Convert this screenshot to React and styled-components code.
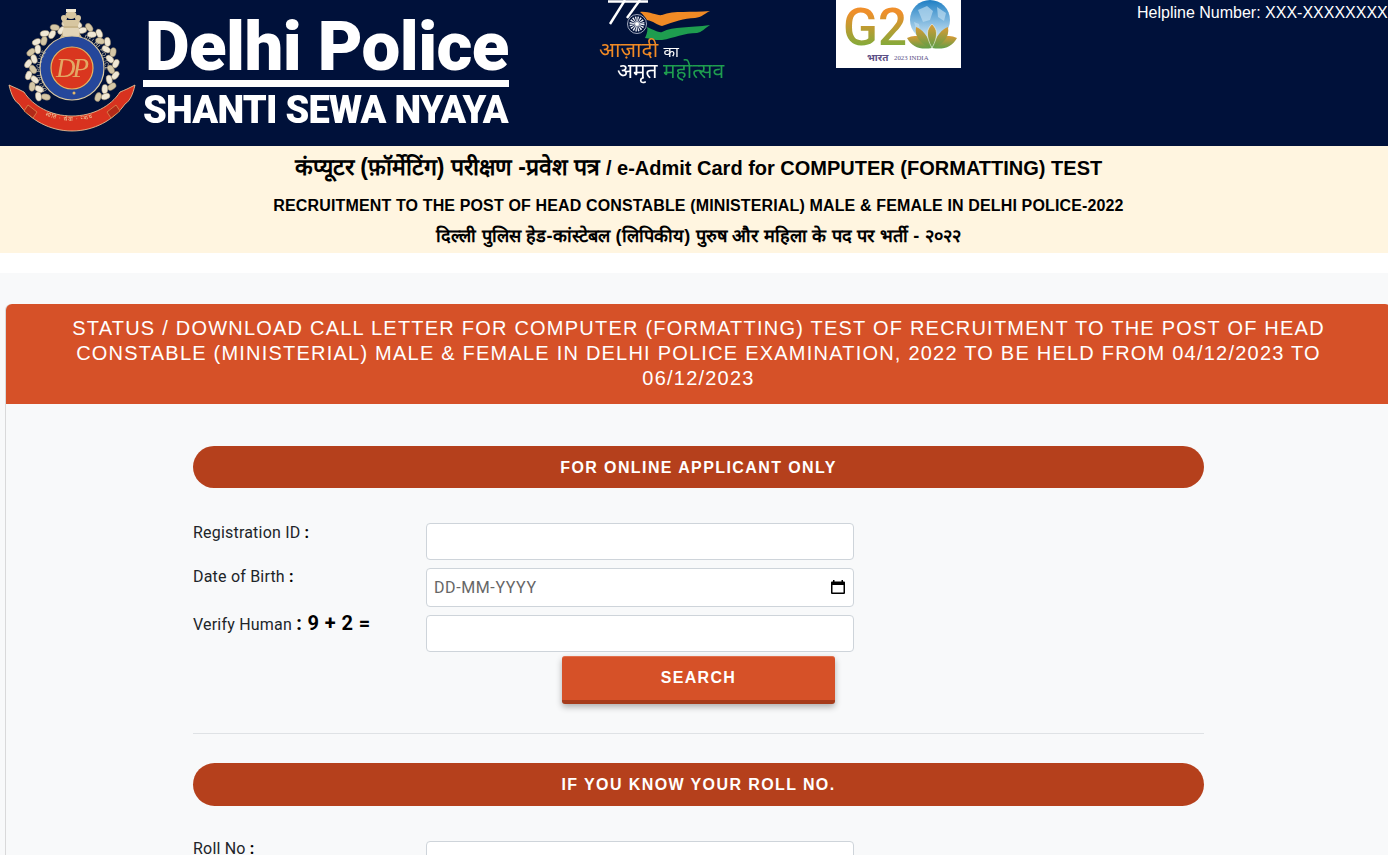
import React from "react";
import styled, { createGlobalStyle } from "styled-components";

const Global = createGlobalStyle`
  html, body { margin: 0; padding: 0; height: 855px; overflow: hidden; background: #fff; }
  * { box-sizing: border-box; }
  body { font-family: Roboto, "Liberation Sans", "Noto Sans", sans-serif; color: #212529; }
`;

const Page = styled.div`
  width: 1388px;
  height: 855px;
  overflow: hidden;
`;

const TopBar = styled.header`
  height: 146px;
  background: #00113a;
  display: flex;
  align-items: flex-start;
  overflow: hidden;
`;

const Brand = styled.div`
  display: flex;
  width: 599px;
  padding: 8px 0 0 8px;
  gap: 7px;
  filter: blur(0.4px);
`;

const EmblemSvg = styled.svg`
  display: block;
  flex: none;
`;

const BrandText = styled.div`
  display: flex;
  flex-direction: column;
  width: 366px;
  color: #fff;
  font-family: Roboto, sans-serif;
  font-weight: 900;
  white-space: nowrap;
`;

const BrandName = styled.div`
  font-size: 69px;
  line-height: 64px;
  letter-spacing: -0.6px;
  padding: 7px 0 0 2px;
`;

const BrandRule = styled.div`
  height: 7px;
  background: #fff;
  margin-top: 1px;
`;

const BrandMotto = styled.div`
  font-size: 38px;
  line-height: 40px;
  margin-top: 3px;
  letter-spacing: -0.75px;
`;

const Azadi = styled.div`
  width: 237px;
  height: 84px;
  filter: blur(0.3px);
`;

const AzadiLine = styled.div`
  font-family: "Noto Sans", sans-serif;
  white-space: nowrap;
  font-size: 21px;
  line-height: 19px;
  padding-left: ${(p) => p.$pad}px;
`;

const AzadiMark = styled.svg`
  display: block;
`;

const Tint = styled.span`
  color: ${(p) => p.$c};
  font-size: ${(p) => (p.$size ? `${p.$size}px` : "inherit")};
`;

const G20Box = styled.div`
  width: 125px;
  height: 68px;
  background: #fff;
  flex: none;
`;

const G20Svg = styled.svg`
  display: block;
`;

const Helpline = styled.div`
  margin-left: 176px;
  margin-top: 4px;
  color: #fff;
  font-family: "Liberation Sans", Arial, sans-serif;
  font-size: 16px;
  line-height: 18px;
  white-space: nowrap;
`;

const Notice = styled.section`
  height: 107px;
  background: #fff5e0;
  text-align: center;
  color: #000;
  font-family: "Liberation Sans", Arial, sans-serif;
  font-weight: 700;
  display: flex;
  flex-direction: column;
  align-items: center;
  padding: 7px 0 0 9px;
`;

const NoticeLine = styled.div`
  font-size: ${(p) => p.$size}px;
  line-height: ${(p) => p.$lh}px;
  letter-spacing: ${(p) => p.$ls || 0}px;
  margin-top: ${(p) => p.$mt || 0}px;
  white-space: nowrap;
`;

const Hindi = styled.span`
  font-size: 23px;
`;

const Gap = styled.div`
  height: 20px;
  background: #fff;
`;

const Body = styled.main`
  background: #f8f9fa;
  padding: 31px 0 0 5px;
  height: 582px;
`;

const Card = styled.div`
  width: 1387px;
  border: 1px solid rgba(0, 0, 0, 0.125);
  border-top: 0;
  border-bottom: 0;
  border-radius: 6px 6px 0 0;
  background: #f8f9fa;
`;

const CardHead = styled.h1`
  margin: 0;
  height: 100px;
  padding: 12px 60px 0;
  background: #d65128;
  color: #fff;
  border-radius: 6px 6px 0 0;
  font-family: "Liberation Sans", Arial, sans-serif;
  font-weight: 400;
  font-size: 20px;
  line-height: 25px;
  letter-spacing: 1.22px;
  text-align: center;
`;

const CardBody = styled.div`
  padding: 42px 187px 0;
`;

const Pill = styled.div`
  height: ${(p) => p.$h}px;
  padding-top: ${(p) => p.$pt || 0}px;
  border-radius: 22px;
  background: #b5401c;
  color: #fff;
  font-family: "Liberation Sans", Arial, sans-serif;
  font-weight: 700;
  font-size: 16px;
  letter-spacing: 1.4px;
  display: flex;
  align-items: center;
  justify-content: center;
`;

const Row = styled.div`
  display: grid;
  grid-template-columns: 233px 428px;
  margin-top: ${(p) => p.$mt}px;
`;

const Label = styled.label`
  font-family: Roboto, sans-serif;
  font-size: 16px;
  line-height: 24px;
  letter-spacing: 0.2px;
  color: #212529;
  margin-top: ${(p) => p.$mt}px;
  white-space: nowrap;
`;

const Strong = styled.b`
  font-size: ${(p) => p.$size || 16}px;
  font-weight: 700;
  color: #000;
  letter-spacing: 0.4px;
`;

const Field = styled.div`
  position: relative;
  height: ${(p) => p.$h}px;
`;

const Input = styled.input`
  display: block;
  width: 100%;
  height: 100%;
  border: 1px solid #ced4da;
  border-radius: 4px;
  background: #fff;
  padding: 0 7px;
  font-family: Roboto, sans-serif;
  font-size: 16px;
  letter-spacing: 0.6px;
  &::placeholder { color: #666; opacity: 1; }
`;

const CalIcon = styled.svg`
  position: absolute;
  right: 8px;
  top: 11px;
`;

const ButtonRow = styled.div`
  display: flex;
  justify-content: center;
  margin-top: 4px;
`;

const SearchButton = styled.button`
  width: 273px;
  height: 48px;
  padding: 0 0 2px;
  border: 0;
  border-top: 1px solid #e2704c;
  border-bottom: 4px solid #a63b1b;
  border-radius: 3px;
  background: #d65128;
  color: #fff;
  font-family: "Liberation Sans", Arial, sans-serif;
  font-weight: 700;
  font-size: 16px;
  letter-spacing: 1.3px;
  box-shadow: 0 3px 6px rgba(0, 0, 0, 0.3);
`;

const Divider = styled.hr`
  margin: 29px 0;
  border: 0;
  border-top: 1px solid #dfe2e5;
`;

function Emblem() {
  const leaves = [];
  for (let i = 0; i <= 36; i++) {
    const deg = -138 + (i * 276) / 36;
    leaves.push(deg);
  }
  const rad = (d) => (d * Math.PI) / 180;
  return (
    <EmblemSvg width="128" height="124" viewBox="8 8 128 124">
      <defs>
        <path id="ringL" d="M47 90A32 32 0 0 1 62 40" />
        <path id="ringR" d="M84 38A32 32 0 0 1 100 85" />
        <path id="rib" d="M38 112Q72 130 106 112" />
      </defs>
      {leaves.map((d, i) => {
        const r = i % 2 ? 44 : 39;
        const x = 72 + Math.sin(rad(d)) * r;
        const y = 68 - Math.cos(rad(d)) * r;
        return (
          <ellipse
            key={i}
            cx={x}
            cy={y}
            rx="4.6"
            ry="3"
            transform={`rotate(${d + (i % 2 ? 30 : -30)} ${x} ${y})`}
            fill={i % 3 ? "#f0e8d6" : "#d5c7a6"}
            stroke="#9c8c6c"
            strokeWidth=".5"
          />
        );
      })}
      <g fill="#d7c6a0">
        <ellipse cx="71" cy="15" rx="5.500" ry="4" />
        <circle cx="64" cy="18" r="3" />
        <circle cx="78" cy="18" r="3" />
        <path d="M62 20h18l-2 6h-14z" />
        <path d="M64 26h14l2 8 3 5H59l3-5z" fill="#c9b68c" />
      </g>
      <path d="M66 9h10v3H66z" fill="#efe6d0" />
      <path d="M63 28h16v8H63z" fill="#efe6d0" opacity=".65" />
      <circle cx="72" cy="68" r="32" fill="#25479b" stroke="#d9c8a2" strokeWidth="1.2" />
      <text fontFamily="Roboto, sans-serif" fontSize="5.500" fill="#d9cfb2" letterSpacing=".5">
        <textPath href="#ringL">DELHI POLICE</textPath>
      </text>
      <text fontFamily="Roboto, sans-serif" fontSize="5.500" fill="#d9cfb2" letterSpacing=".5">
        <textPath href="#ringR">DELHI POLICE</textPath>
      </text>
      <circle cx="72" cy="68" r="21" fill="#d9361f" stroke="#e9b65f" strokeWidth="1.2" />
      <text x="71" y="77" textAnchor="middle" fontFamily="Liberation Serif, serif" fontStyle="italic" fontSize="27" letterSpacing="-3" fill="#e3a864">DP</text>
      <circle cx="74" cy="93" r="1.500" fill="#e3b86a" />
      <path d="M9 85l9 4c2 1 4 2 6 3 9 14 27 24 48 24s39-10 48-24c2-1 5-2 7-3l8-4c-2 9-5 16-10 19-11 16-31 27-53 27s-42-11-53-27c-5-3-8-10-10-19z" fill="#d8321f" stroke="#f0d0a0" strokeWidth=".8" />
      <path d="M28 105l9 7-4 6-9-7zM116 105l-9 7 4 6 9-7z" fill="#b22a18" stroke="#e0a860" strokeWidth=".6" />
      <text fontFamily="Noto Sans, sans-serif" fontSize="5.500" fill="#f1d9a8" letterSpacing="1">
        <textPath href="#rib" startOffset="8">शांति · सेवा · न्याय</textPath>
      </text>
    </EmblemSvg>
  );
}

function AzadiLogo() {
  return (
    <Azadi>
      <AzadiMark width="125" height="40" viewBox="0 0 125 40">
        <g stroke="#fff" strokeWidth="2.400" fill="none">
          <path d="M26 0L11 24" />
          <path d="M41 0L28 18" />
          <path d="M9 1.500H49" />
        </g>
        <circle cx="38" cy="24" r="9.500" fill="#00113a" stroke="#c9cfde" strokeWidth=".8" />
        <circle cx="38" cy="24" r="4.500" fill="none" stroke="#eef0f6" strokeWidth="6" strokeDasharray="1 .75" />
        <circle cx="38" cy="24" r="2" fill="#fff" />
        <path d="M41 12C50 11 58 16 63 15C75 10 92 13 111 11C105 14 103 17 96 18C85 18 75 22 63 26C58 25 54 21 48 20C46 17 44 14 41 12Z" fill="#f08a25" />
        <path d="M48 27C55 30 60 33 63 32C75 26 90 28 111 25C105 29 103 32 98 33C85 33 75 38 63 40C58 41 54 39 46 38C48 34 49 30 48 27Z" fill="#1e9d4f" />
      </AzadiMark>
      <AzadiLine $pad={0}>
        <Tint $c="#f08a25">आज़ादी</Tint> <Tint $c="#fff" $size={15}>का</Tint>
      </AzadiLine>
      <AzadiLine $pad={18}>
        <Tint $c="#fff">अमृत</Tint> <Tint $c="#1e9d4f">महोत्सव</Tint>
      </AzadiLine>
    </Azadi>
  );
}

function G20Logo() {
  return (
    <G20Box>
      <G20Svg width="125" height="68" viewBox="0 0 125 68">
        <defs>
          <linearGradient id="g" x1="0" x2="0" y1="0" y2="1">
            <stop offset=".25" stopColor="#ef8f2b" />
            <stop offset=".85" stopColor="#79ad3c" />
          </linearGradient>
          <linearGradient id="b" x1="0" x2="0" y1="0" y2="1">
            <stop offset="0" stopColor="#1f7fc4" />
            <stop offset="1" stopColor="#d8ecf7" />
          </linearGradient>
          <linearGradient id="p" x1="0" x2="0" y1="0" y2="1">
            <stop offset="0" stopColor="#d99a35" />
            <stop offset="1" stopColor="#5f9e47" />
          </linearGradient>
        </defs>
        <text x="7" y="45" fontFamily="Roboto, sans-serif" fontSize="52" fontWeight="500" fill="url(#g)" textLength="64" lengthAdjust="spacingAndGlyphs">G2</text>
        <circle cx="94" cy="20" r="20" fill="url(#b)" />
        <path d="M82 10l9-4 6 5-3 9-7 2zM101 7l9 6-2 8-6-4zM78 22l5 2 1 6-4-1z" fill="#bcdcf0" opacity=".7" />
        <path d="M71 38c8-4 15-2 20 5l5 5c-12 2-20-1-25-10z" fill="url(#p)" />
        <path d="M121 38c-8-4-15-2-20 5l-5 5c12 2 20-1 25-10z" fill="url(#p)" />
        <path d="M80 27c6 2 12 9 16 21-10-3-18-10-16-21z" fill="url(#p)" />
        <path d="M112 27c-6 2-12 9-16 21 10-3 18-10 16-21z" fill="url(#p)" />
        <path d="M96 24c5 5 7 11 0 24-7-13-5-19 0-24z" fill="url(#p)" stroke="#fff" strokeWidth=".5" />
        <text x="31" y="61" fontFamily="Noto Sans, sans-serif" fontSize="10" fontWeight="700" fill="#5b4f86">भारत</text>
        <text x="58" y="60" fontFamily="Liberation Serif, serif" fontSize="6.800" fill="#5b4f86">2023 INDIA</text>
      </G20Svg>
    </G20Box>
  );
}

export default function App() {
  return (
    <Page>
      <Global />
      <TopBar>
        <Brand>
          <Emblem />
          <BrandText>
            <BrandName>Delhi Police</BrandName>
            <BrandRule />
            <BrandMotto>SHANTI SEWA NYAYA</BrandMotto>
          </BrandText>
        </Brand>
        <AzadiLogo />
        <G20Logo />
        <Helpline>Helpline Number: XXX-XXXXXXXX</Helpline>
      </TopBar>
      <Notice>
        <NoticeLine $size={20} $lh={28}><Hindi>कंप्यूटर (फ़ॉर्मेटिंग) परीक्षण -प्रवेश पत्र</Hindi> / e-Admit Card for COMPUTER (FORMATTING) TEST</NoticeLine>
        <NoticeLine $size={16} $lh={24} $mt={12} $ls={0.14}>RECRUITMENT TO THE POST OF HEAD CONSTABLE (MINISTERIAL) MALE &amp; FEMALE IN DELHI POLICE-2022</NoticeLine>
        <NoticeLine $size={18.1} $lh={26} $mt={5} $ls={0.15}>दिल्ली पुलिस हेड-कांस्टेबल (लिपिकीय) पुरुष और महिला के पद पर भर्ती - २०२२</NoticeLine>
      </Notice>
      <Gap />
      <Body>
        <Card>
          <CardHead>STATUS / DOWNLOAD CALL LETTER FOR COMPUTER (FORMATTING) TEST OF RECRUITMENT TO THE POST OF HEAD CONSTABLE (MINISTERIAL) MALE &amp; FEMALE IN DELHI POLICE EXAMINATION, 2022 TO BE HELD FROM 04/12/2023 TO 06/12/2023</CardHead>
          <CardBody>
            <Pill $h={42} $pt={1}>FOR ONLINE APPLICANT ONLY</Pill>
            <Row $mt={35}>
              <Label $mt={-2}>Registration ID <Strong>:</Strong></Label>
              <Field $h={37}><Input aria-label="Registration ID" /></Field>
            </Row>
            <Row $mt={8}>
              <Label $mt={-3}>Date of Birth <Strong>:</Strong></Label>
              <Field $h={39}>
                <Input aria-label="Date of Birth" placeholder="DD-MM-YYYY" />
                <CalIcon width="16" height="16" viewBox="0 0 16 16">
                  <path d="M3 1v1.500H2a1 1 0 0 0-1 1V14a1 1 0 0 0 1 1h12a1 1 0 0 0 1-1V3.500a1 1 0 0 0-1-1h-1V1h-1.500v1.500h-7V1zM2.500 6h11v7.500h-11z" fill="#000" />
                </CalIcon>
              </Field>
            </Row>
            <Row $mt={8}>
              <Label $mt={-4}>Verify Human <Strong $size={20}>: 9 + 2 =</Strong></Label>
              <Field $h={37}><Input aria-label="Verify Human" /></Field>
            </Row>
            <ButtonRow><SearchButton>SEARCH</SearchButton></ButtonRow>
            <Divider />
            <Pill $h={43}>IF YOU KNOW YOUR ROLL NO.</Pill>
            <Row $mt={35}>
              <Label $mt={-4}>Roll No <Strong>:</Strong></Label>
              <Field $h={37}><Input aria-label="Roll No" /></Field>
            </Row>
          </CardBody>
        </Card>
      </Body>
    </Page>
  );
}
